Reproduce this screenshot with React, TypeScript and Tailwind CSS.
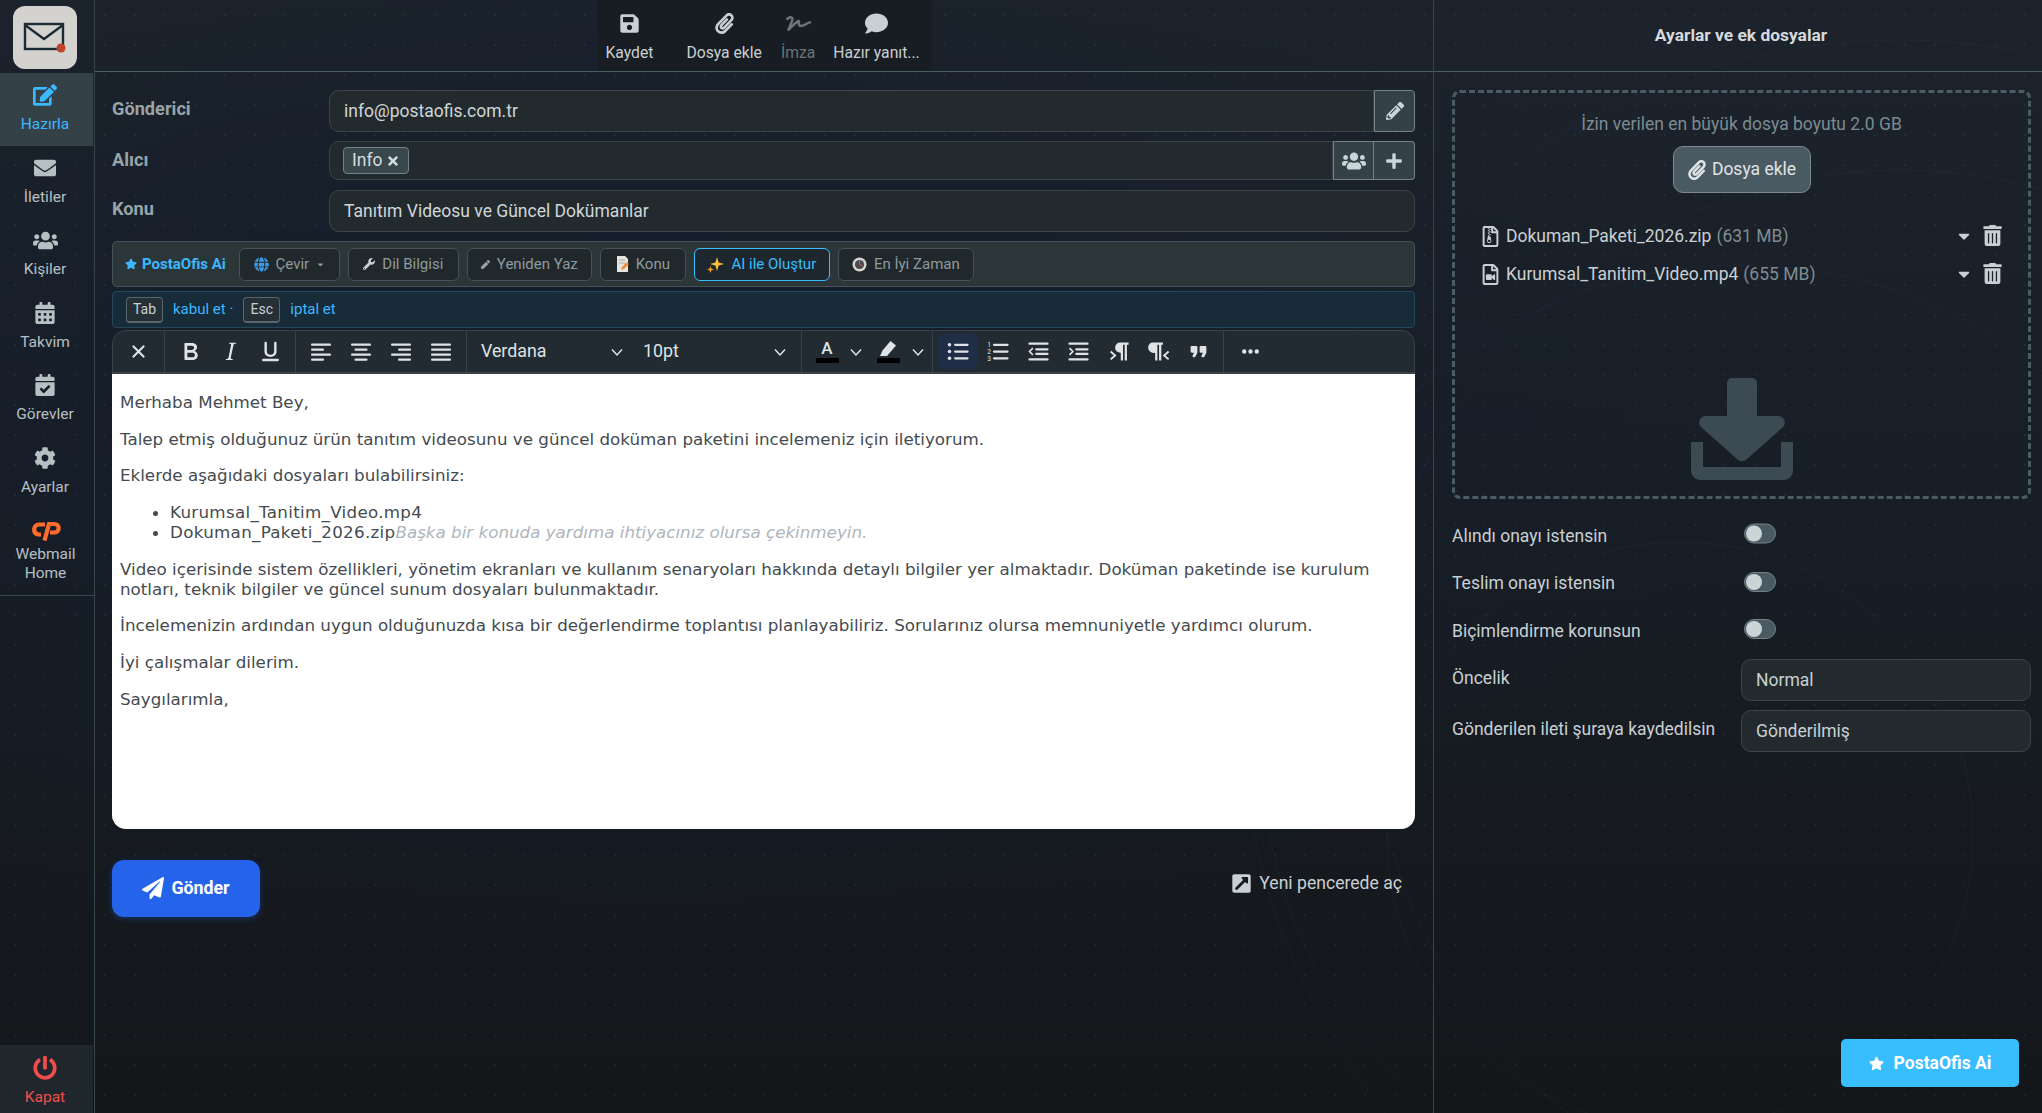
import React from 'react';
import {
  FaEdit, FaEnvelope, FaUsers, FaCalendarAlt, FaCalendarCheck, FaCog, FaPowerOff,
  FaSave, FaPaperclip, FaSignature, FaComment, FaPencilAlt, FaPlus, FaTimes, FaStar, FaWrench, FaPen,
  FaRegFileArchive, FaRegFileVideo, FaTrashAlt, FaCaretDown, FaPaperPlane, FaExternalLinkSquareAlt, FaGlobe,
} from 'react-icons/fa';

const navItems = [
  { label: 'Hazırla', icon: <FaEdit size={24} />, active: true },
  { label: 'İletiler', icon: <FaEnvelope size={22} /> },
  { label: 'Kişiler', icon: <FaUsers size={25} /> },
  { label: 'Takvim', icon: <FaCalendarAlt size={22} /> },
  { label: 'Görevler', icon: <FaCalendarCheck size={22} /> },
  { label: 'Ayarlar', icon: <FaCog size={22} /> },
];

const Ico = ({ children, size = 27 }: { children: React.ReactNode; size?: number }) => (
  <svg width={size} height={size} viewBox="0 0 24 24" fill="currentColor">{children}</svg>
);

const Bars = ({ rows }: { rows: [number, number][] }) => (
  <Ico size={24}>
    {rows.map(([x, w], i) => (
      <rect key={i} x={x} y={3.5 + i * 5} width={w} height={2.2} rx={1} />
    ))}
  </Ico>
);

const ToolBtn = ({ children, className = 'w-[40px]' }: { children: React.ReactNode; className?: string }) => (
  <div className={`flex h-[35px] items-center justify-center rounded-md ${className}`}>{children}</div>
);

const Chevron = () => (
  <svg width="14" height="14" viewBox="0 0 14 14" fill="none" stroke="currentColor" strokeWidth="1.5"><path d="M2 4.500l5 5.500 5-5.500" /></svg>
);

const AiButton = ({ children, width, active }: { children: React.ReactNode; width: string; active?: boolean }) => (
  <div className={`flex h-[33px] items-center justify-center gap-[7px] rounded-md border text-[15px] ${width} ${active ? 'border-[#38bdff] text-[#38bdff] bg-[#1e272e]' : 'border-[#465257] text-[#8f9a9e] bg-[#20282c]'}`}>
    {children}
  </div>
);

const Toggle = () => (
  <div className="flex h-[20px] w-[32px] items-center rounded-full border border-[#71828a] bg-[#4a5a62] pl-[1px]">
    <div className="h-[16px] w-[16px] rounded-full bg-[#ccd5d6]" />
  </div>
);

const FileRow = ({ icon, name, size }: { icon: React.ReactNode; name: string; size: string }) => (
  <div className="flex h-[38px] items-center text-[17.5px] text-[#c9d0d3]">
    <div className="w-[26px] text-[#c9d0d3]">{icon}</div>
    <span>{name}</span>
    <span className="ml-[5px] text-[#7f8d93]">{size}</span>
    <div className="ml-auto flex items-center gap-[9px] text-[#c9d0d3]">
      <FaCaretDown size={18} />
      <FaTrashAlt size={21} className="-translate-y-[1px]" />
    </div>
  </div>
);

export default function App() {
  return (
    <div className="relative flex h-screen w-full overflow-hidden font-[Roboto,sans-serif] text-[17.5px] text-[#cfd6d9] bg-[radial-gradient(rgba(255,255,255,0.045)_1px,transparent_1.5px),radial-gradient(ellipse_at_32%_38%,#141d2c_0%,rgba(20,29,44,0)_55%),linear-gradient(180deg,#1c232c_0%,#181e26_45%,#14171a_100%)] bg-[size:30px_30px,100%_100%,100%_100%]">
      {/* faint arcs behind everything */}
      <svg className="pointer-events-none absolute inset-0" width="2042" height="1113" fill="none" stroke="#6f9cc8" strokeOpacity="0.05">
        <circle cx="1741" cy="745" r="480" />
        <circle cx="1680" cy="835" r="293" />
        <circle cx="1900" cy="700" r="660" />
        <circle cx="1900" cy="700" r="530" />
      </svg>

      {/* Sidebar */}
      <aside className="relative z-10 flex w-[95px] shrink-0 flex-col border-r border-[#37454c]">
        <div className="h-[73px] pl-[13px] pt-[6px]">
          <div className="flex h-[63px] w-[64px] items-center justify-center rounded-[12px] bg-[#d4d2cf]">
            <svg width="44" height="34" viewBox="0 0 44 34" fill="none">
              <rect x="2" y="3" width="38" height="25" stroke="#1c2a36" strokeWidth="2.4" />
              <path d="M2 4l19 14L40 4" stroke="#1c2a36" strokeWidth="2.4" />
              <circle cx="38" cy="27" r="4.5" fill="#c0432c" />
            </svg>
          </div>
        </div>
        {navItems.map(item => (
          <div
            key={item.label}
            className={`flex h-[72.6px] w-[93px] flex-col items-center pr-[3px] pt-[9px] ${item.active ? 'bg-[#344248] text-[#3bb8ff]' : 'text-[#b6c0c3]'}`}
          >
            <div className="flex h-[26px] items-center">{item.icon}</div>
            <span className="mt-[7px] text-[15.5px] leading-[19px]">{item.label}</span>
          </div>
        ))}
        <div className="flex h-[87px] w-[94px] flex-col items-center border-b border-[#37454c] pr-[3px] pt-[11px] text-[#b6c0c3]">
          <svg width="30" height="21" viewBox="0 0 30 21" fill="none" stroke="#ff6c2c" strokeWidth="4.2">
            <path d="M14 4.500H8C2 4.500 1.500 13 7 14.500H10" />
            <path d="M13.500 20.500L18 4H23C29.500 4 29 12.500 23 12.500H19" />
          </svg>
          <span className="mt-[4px] text-center text-[15.5px] leading-[19px]">Webmail<br />Home</span>
        </div>
        <div className="mt-auto flex h-[68px] w-[93px] flex-col items-center bg-[#20272c] pr-[3px] pt-[11px] text-[#ef4d4d]">
          <FaPowerOff size={24} />
          <span className="mt-[8px] text-[15.5px] leading-[19px]">Kapat</span>
        </div>
      </aside>

      {/* Composer */}
      <main className="relative z-10 flex w-[1339px] shrink-0 flex-col border-r border-[#37454c]">
        <div className="flex h-[72px] justify-center border-b border-[#4b5e64]">
          <div className="flex h-[71px] w-[335px] bg-[#181d23] pl-[9px] text-[15.7px] text-[#c9d0d3]">
            <div className="flex flex-col items-center pt-[13px]"><FaSave size={21} /><span className="mt-[9px] leading-[20px]">Kaydet</span></div>
            <div className="ml-[33px] flex flex-col items-center pt-[13px]"><FaPaperclip size={21} /><span className="mt-[9px] leading-[20px]">Dosya ekle</span></div>
            <div className="ml-[19px] flex flex-col items-center pt-[13px] text-[#6a7479]"><FaSignature size={25} className="-my-[2px]" /><span className="mt-[9px] leading-[20px]">İmza</span></div>
            <div className="ml-[18px] flex flex-col items-center pt-[13px]"><FaComment size={23} className="-my-[1px]" /><span className="mt-[9px] leading-[20px]">Hazır yanıt...</span></div>
          </div>
        </div>

        <div className="flex flex-col pl-[17px] pr-[18px] pt-[18px]">
          {/* Gönderici */}
          <div className="flex h-[42px]">
            <label className="w-[217px] pt-[5px] text-[18.2px] font-bold text-[#98a4a8]">Gönderici</label>
            <div className="flex h-[42px] flex-1 items-center rounded-l-[10px] border border-[#3b4549] bg-[#232a2e] pl-[14px] text-[#cfd6d9]">info@postaofis.com.tr</div>
            <div className="flex h-[42px] w-[41px] items-center justify-center rounded-r-[4px] border border-[#71828a] bg-[#344248] text-[#c9d5d8]"><FaPencilAlt size={18} /></div>
          </div>
          {/* Alıcı */}
          <div className="mt-[9px] flex h-[39px]">
            <label className="w-[217px] pt-[5px] text-[18.2px] font-bold text-[#98a4a8]">Alıcı</label>
            <div className="flex h-[39px] flex-1 items-center rounded-l-[10px] border border-[#3b4549] bg-[#232a2e] pl-[13px]">
              <span className="flex h-[27px] items-center gap-[3px] rounded-[4px] border border-[#71828a] bg-[#3a474d] px-[8px] text-[#d5dcde]">Info <FaTimes size={14} /></span>
            </div>
            <div className="flex h-[39px] w-[41px] items-center justify-center border border-[#71828a] bg-[#344248] text-[#c9d5d8]"><FaUsers size={24} /></div>
            <div className="flex h-[39px] w-[41px] items-center justify-center rounded-r-[4px] border border-l-0 border-[#71828a] bg-[#344248] text-[#c9d5d8]"><FaPlus size={18} /></div>
          </div>
          {/* Konu */}
          <div className="mt-[10px] flex h-[42px]">
            <label className="w-[217px] pt-[5px] text-[18.2px] font-bold text-[#98a4a8]">Konu</label>
            <div className="flex h-[42px] flex-1 items-center rounded-[10px] border border-[#3b4549] bg-[#232a2e] pl-[14px] text-[#cfd6d9]">Tanıtım Videosu ve Güncel Dokümanlar</div>
          </div>

          {/* AI bar */}
          <div className="mt-[9px] flex h-[46px] items-center gap-[8px] rounded-[5px] border border-[#465257] bg-[#2b3639] pl-[12px]">
            <div className="mr-[5px] flex items-center gap-[5px] text-[15px] font-bold text-[#3bb8ff]"><FaStar size={12} /> PostaOfis Ai</div>
            <AiButton width="w-[101px]"><FaGlobe size={15} className="text-[#3b9be8]" /><span>Çevir</span><FaCaretDown size={9} /></AiButton>
            <AiButton width="w-[111px]"><FaWrench size={12} className="text-[#c9d0d3]" /><span>Dil Bilgisi</span></AiButton>
            <AiButton width="w-[125px]"><FaPen size={9} className="text-[#9aa4a8]" /><span>Yeniden Yaz</span></AiButton>
            <AiButton width="w-[86px]">
              <svg width="13" height="16" viewBox="0 0 13 16"><path d="M1 0h8l3 3v13H1z" fill="#e8e4e0" /><path d="M3 4h6M3 7h6" stroke="#a9a5a1" /><path d="M5 14l1-3 5-5 2 2-5 5z" fill="#f08a3c" /></svg>
              <span>Konu</span>
            </AiButton>
            <AiButton width="w-[136px]" active>
              <svg width="17" height="17" viewBox="0 0 17 17"><path d="M10 1l1.6 5.4L17 8l-5.4 1.6L10 15 8.4 9.6 3 8l5.4-1.6z" fill="#fbc13b" /><path d="M3.5 10l.9 2.6L7 13.5l-2.6.9L3.5 17l-.9-2.6L0 13.5l2.6-.9z" fill="#f59a23" /></svg>
              <span>AI ile Oluştur</span>
            </AiButton>
            <AiButton width="w-[136px]">
              <svg width="15" height="15" viewBox="0 0 15 15"><circle cx="7.5" cy="7.5" r="7" fill="#d9d6d2" /><circle cx="7.5" cy="7.5" r="4.6" fill="#4a4a50" /><path d="M7.5 3.5v4l3 1" stroke="#e85a4f" fill="none" /></svg>
              <span>En İyi Zaman</span>
            </AiButton>
          </div>

          {/* Autocomplete hint */}
          <div className="mt-[4px] flex h-[37px] items-center rounded-[4px] border border-[#23465c] bg-[#172b38] pl-[13px] text-[15px] text-[#3bb8ff]">
            <kbd className="flex h-[26px] w-[37px] items-center justify-center rounded-[4px] border border-b-2 border-[#5a666b] bg-[#243036] font-[Roboto,sans-serif] text-[14px] text-[#c9d0d3]">Tab</kbd>
            <span className="ml-[10px]">kabul et ·</span>
            <kbd className="ml-[10px] flex h-[26px] w-[37px] items-center justify-center rounded-[4px] border border-b-2 border-[#5a666b] bg-[#243036] font-[Roboto,sans-serif] text-[14px] text-[#c9d0d3]">Esc</kbd>
            <span className="ml-[10px]">iptal et</span>
          </div>

          {/* Editor */}
          <div className="mt-[2px] overflow-hidden rounded-[14px]">
            <div className="flex h-[44px] items-center rounded-t-[14px] border border-b-2 border-[#3a4249] bg-[#222a32] text-[#dfe3e6]">
              <div className="flex h-full w-[52px] items-center justify-center border-r border-[#3a4249]">
                <Ico size={25}><path d="M17.7 7.7 13.4 12l4.3 4.3a1 1 0 0 1-1.4 1.4L12 13.4l-4.3 4.3a1 1 0 0 1-1.4-1.4l4.3-4.3-4.3-4.3a1 1 0 0 1 1.4-1.4l4.3 4.3 4.3-4.3a1 1 0 0 1 1.4 1.4z" /></Ico>
              </div>
              <div className="flex h-full w-[131px] items-center justify-center border-r border-[#3a4249]">
                <ToolBtn><Ico size={29}><path d="M7.8 19c-.3 0-.5 0-.6-.2l-.2-.5V5.7c0-.2 0-.4.2-.5l.6-.2h5c1.5 0 2.7.3 3.5 1 .7.6 1.1 1.4 1.1 2.5a3 3 0 0 1-.6 1.9c-.4.6-1 1-1.6 1.2.4.1.9.3 1.3.6s.8.7 1 1.2c.4.4.5 1 .5 1.6 0 1.3-.4 2.3-1.3 3-.8.7-2.1 1-3.8 1H7.8zm5-8.3c.6 0 1.2-.1 1.6-.5.4-.3.6-.7.6-1.3 0-1.1-.8-1.7-2.4-1.7H9.3v3.5h3.4zm.5 6c.7 0 1.3-.1 1.7-.4.4-.4.6-.9.6-1.5s-.2-1-.7-1.4c-.4-.3-1-.4-2-.4H9.4v3.8h4z" /></Ico></ToolBtn>
                <ToolBtn><Ico size={29}><path d="m16.7 4.7-.1.9h-.3c-.6 0-1 0-1.4.3-.3.3-.4.6-.5 1.1l-2.1 9.8v.6c0 .5.4.8 1.4.8h.2l-.2.8H8l.2-.8h.2c1.1 0 1.8-.5 2-1.5l2-9.8.1-.5c0-.6-.4-.8-1.4-.8h-.3l.2-.9h5.8z" /></Ico></ToolBtn>
                <ToolBtn><Ico size={29}><path d="M16 4c.6 0 1 .4 1 1v7c0 2.8-2.2 4.5-5 4.5S7 14.800 7 12V5c0-.6.4-1 1-1s1 .4 1 1v7c0 1.7 1.3 2.700 3 2.700s3-1 3-2.700V5c0-.6.4-1 1-1zM6 18h12c.6 0 1 .4 1 1s-.4 1-1 1H6a1 1 0 1 1 0-2z" /></Ico></ToolBtn>
              </div>
              <div className="flex h-full w-[171px] items-center justify-center border-r border-[#3a4249]">
                <ToolBtn><Bars rows={[[2, 20], [2, 13], [2, 20], [2, 13]]} /></ToolBtn>
                <ToolBtn><Bars rows={[[2, 20], [5.500, 13], [2, 20], [5.500, 13]]} /></ToolBtn>
                <ToolBtn><Bars rows={[[2, 20], [9, 13], [2, 20], [9, 13]]} /></ToolBtn>
                <ToolBtn><Bars rows={[[2, 20], [2, 20], [2, 20], [2, 20]]} /></ToolBtn>
              </div>
              <div className="flex h-full w-[335px] items-center border-r border-[#3a4249] pl-[14px]">
                <span className="w-[129px] text-[17.8px]">Verdana</span>
                <Chevron />
                <span className="ml-[19px] w-[130px] text-[17.8px]">10pt</span>
                <Chevron />
              </div>
              <div className="flex h-full w-[131px] items-center border-r border-[#3a4249] pl-[13px]">
                <div className="flex w-[24px] flex-col items-center">
                  <span className="text-[17px] font-medium leading-[17px]">A</span>
                  <div className="mt-[1px] h-[5px] w-[23px] bg-black" />
                </div>
                <div className="ml-[10px]"><Chevron /></div>
                <div className="ml-[13px] flex w-[24px] flex-col items-center">
                  <svg width="20" height="17" viewBox="0 0 20 17" fill="currentColor"><path d="M12.500 1 18 5.500 9 16H2l2.500-5.500z" /></svg>
                  <div className="mt-[1px] h-[5px] w-[23px] bg-black" />
                </div>
                <div className="ml-[11px]"><Chevron /></div>
              </div>
              <div className="flex h-full w-[291px] items-center border-r border-[#3a4249] pl-[5px]">
                <ToolBtn className="w-[40px] bg-[#1f2d47]">
                  <Ico><circle cx="4" cy="6" r="1.600" /><circle cx="4" cy="12" r="1.600" /><circle cx="4" cy="18" r="1.600" /><rect x="8" y="5" width="13" height="2" rx="1" /><rect x="8" y="11" width="13" height="2" rx="1" /><rect x="8" y="17" width="13" height="2" rx="1" /></Ico>
                </ToolBtn>
                <ToolBtn>
                  <Ico><text x="2" y="8" fontSize="6" fill="currentColor">1</text><text x="2" y="14" fontSize="6" fill="currentColor">2</text><text x="2" y="20" fontSize="6" fill="currentColor">3</text><rect x="7" y="5" width="14" height="2" rx="1" /><rect x="7" y="11" width="14" height="2" rx="1" /><rect x="7" y="17" width="14" height="2" rx="1" /></Ico>
                </ToolBtn>
                <ToolBtn>
                  <Ico><rect x="3" y="4" width="18" height="2" rx="1" /><rect x="9" y="9" width="12" height="2" rx="1" /><rect x="9" y="13" width="12" height="2" rx="1" /><rect x="3" y="18" width="18" height="2" rx="1" /><path d="M7 9l-3 3 3 3" fill="none" stroke="currentColor" strokeWidth="1.500" /></Ico>
                </ToolBtn>
                <ToolBtn>
                  <Ico><rect x="3" y="4" width="18" height="2" rx="1" /><rect x="9" y="9" width="12" height="2" rx="1" /><rect x="9" y="13" width="12" height="2" rx="1" /><rect x="3" y="18" width="18" height="2" rx="1" /><path d="M4 9l3 3-3 3" fill="none" stroke="currentColor" strokeWidth="1.500" /></Ico>
                </ToolBtn>
                <ToolBtn>
                  <Ico><path d="M13 4h8v2h-1.500v14h-2V6h-1.500v14h-2v-7a4.500 4.500 0 0 1-1-9z" /><path d="M5 12l4 3.500L5 19" fill="none" stroke="currentColor" strokeWidth="1.700" /></Ico>
                </ToolBtn>
                <ToolBtn>
                  <Ico><path d="M6 4h10v2h-1.500v14h-2V6H11v14H9v-7a4.500 4.500 0 0 1-3-9z" /><path d="M21 12l-4 3.500L21 19" fill="none" stroke="currentColor" strokeWidth="1.700" /></Ico>
                </ToolBtn>
                <ToolBtn>
                  <Ico><path d="M7.500 17h.9c.4 0 .7-.2.9-.6L11 13V8c0-.6-.4-1-1-1H6a1 1 0 0 0-1 1v4c0 .6.4 1 1 1h2l-1.300 2.700a1 1 0 0 0 .8 1.300zm8 0h.9c.4 0 .7-.2.9-.6L19 13V8c0-.6-.4-1-1-1h-4a1 1 0 0 0-1 1v4c0 .6.4 1 1 1h2l-1.300 2.700a1 1 0 0 0 .8 1.300z" /></Ico>
                </ToolBtn>
              </div>
              <div className="flex h-full flex-1 items-center pl-[6px]">
                <ToolBtn><Ico size={25}><circle cx="6" cy="12" r="2.100" /><circle cx="12" cy="12" r="2.100" /><circle cx="18" cy="12" r="2.100" /></Ico></ToolBtn>
              </div>
            </div>
            <div className="h-[455px] bg-white pl-[8px] pr-[24px] pt-[18px] font-[DejaVu_Sans,sans-serif] text-[16.72px] leading-[20px] text-[#444b50]">
              <p className="mb-[16.7px]">Merhaba Mehmet Bey,</p>
              <p className="mb-[16.7px]">Talep etmiş olduğunuz ürün tanıtım videosunu ve güncel doküman paketini incelemeniz için iletiyorum.</p>
              <p className="mb-[16.7px]">Eklerde aşağıdaki dosyaları bulabilirsiniz:</p>
              <ul className="mb-[16.7px] list-disc pl-[50px]">
                <li><span className="tracking-[0.3px]">Kurumsal_Tanitim_Video.mp4</span></li>
                <li><span className="tracking-[0.3px]">Dokuman_Paketi_2026.zip</span><em className="text-[#adb5bd]">Başka bir konuda yardıma ihtiyacınız olursa çekinmeyin.</em></li>
              </ul>
              <p className="mb-[16.7px]">Video içerisinde sistem özellikleri, yönetim ekranları ve kullanım senaryoları hakkında detaylı bilgiler yer almaktadır. Doküman paketinde ise kurulum notları, teknik bilgiler ve güncel sunum dosyaları bulunmaktadır.</p>
              <p className="mb-[16.7px]">İncelemenizin ardından uygun olduğunuzda kısa bir değerlendirme toplantısı planlayabiliriz. Sorularınız olursa memnuniyetle yardımcı olurum.</p>
              <p className="mb-[16.7px]">İyi çalışmalar dilerim.</p>
              <p>Saygılarımla,</p>
            </div>
          </div>

          {/* Footer actions */}
          <div className="mt-[31px] flex items-start justify-between">
            <button className="flex h-[57px] w-[148px] items-center justify-center gap-[7px] rounded-[12px] bg-[#2563eb] pb-[1px] text-[17.8px] font-bold text-white shadow-[0_2px_6px_rgba(37,99,235,0.3)]">
              <FaPaperPlane size={22} /> Gönder
            </button>
            <div className="mr-[13px] mt-[10px] flex items-center gap-[7px] text-[17.6px] text-[#c9d0d3]">
              <FaExternalLinkSquareAlt size={21} /> Yeni pencerede aç
            </div>
          </div>
        </div>
      </main>

      {/* Settings panel */}
      <section className="relative z-10 flex flex-1 flex-col">
        <div className="flex h-[72px] items-center justify-center border-b border-[#4b5e64] pl-[6px] text-[17.4px] font-bold text-[#d5dadd]">Ayarlar ve ek dosyalar</div>
        <div className="pl-[18px] pr-[11px] pt-[18px]">
          <div className="h-[409px] rounded-[8px] border-[3px] border-dashed border-[#4b5b63] px-[25px] pt-[21px]">
            <p className="text-center leading-[20px] text-[#7b8b92]">İzin verilen en büyük dosya boyutu 2.0 GB</p>
            <div className="mt-[12px] flex justify-center">
              <button className="flex h-[47px] w-[138px] items-center justify-center gap-[5px] rounded-[10px] border border-[#7d8b91] bg-[#4a5a62] text-[#e0e4e6]">
                <FaPaperclip size={20} /> Dosya ekle
              </button>
            </div>
            <div className="mt-[24px]">
              <FileRow icon={<FaRegFileArchive size={21} />} name="Dokuman_Paketi_2026.zip" size="(631 MB)" />
              <FileRow icon={<FaRegFileVideo size={21} />} name="Kurumsal_Tanitim_Video.mp4" size="(655 MB)" />
            </div>
            <div className="mt-[85px] flex justify-center">
              <svg width="102" height="102" viewBox="0 0 102 102" fill="#3b4a53">
                <path d="M36 5a5 5 0 0 1 5-5h20a5 5 0 0 1 5 5v33h21c6 0 9 7 5 11L56 81c-3 3-7 3-10 0L10 49c-4-4-1-11 5-11h21z" />
                <path d="M0 64h12v25h78V64h12v28c0 6-4 10-10 10H10C4 102 0 98 0 92z" />
              </svg>
            </div>
          </div>

          <div className="mt-[27px] flex flex-col text-[#c9d0d3]">
            <div className="flex h-[21px] items-center"><span className="w-[292px]">Alındı onayı istensin</span><div className="-translate-y-[3.5px]"><Toggle /></div></div>
            <div className="mt-[26px] flex h-[21px] items-center"><span className="w-[292px]">Teslim onayı istensin</span><div className="-translate-y-[2px]"><Toggle /></div></div>
            <div className="mt-[27px] flex h-[21px] items-center"><span className="w-[292px]">Biçimlendirme korunsun</span><div className="-translate-y-[3px]"><Toggle /></div></div>
            <div className="mt-[17px] flex h-[42px]"><span className="w-[289px] pt-[6px]">Öncelik</span><div className="flex flex-1 items-center rounded-[10px] border border-[#3b4549] bg-[#232a2e] pl-[14px]">Normal</div></div>
            <div className="mt-[9px] flex h-[42px]"><span className="w-[289px] pt-[6px]">Gönderilen ileti şuraya kaydedilsin</span><div className="flex flex-1 items-center rounded-[10px] border border-[#3b4549] bg-[#232a2e] pl-[14px]">Gönderilmiş</div></div>
          </div>
        </div>
      </section>

      {/* Floating assistant button */}
      <button className="absolute bottom-[26px] right-[23px] z-20 flex h-[48px] w-[178px] items-center justify-center gap-[10px] rounded-[5px] bg-[#38bdff] font-bold text-white">
        <FaStar size={15} /> PostaOfis Ai
      </button>
    </div>
  );
}
